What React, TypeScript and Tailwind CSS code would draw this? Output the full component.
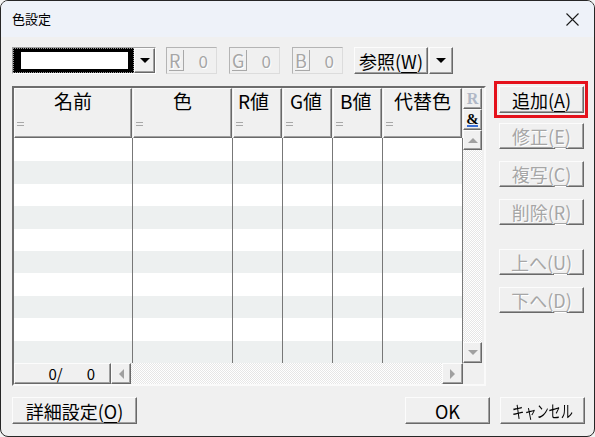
import React from "react";

const raised =
  "bg-[#f0f0f0] border border-t-[#fcfcfc] border-l-[#fcfcfc] border-r-[#696969] border-b-[#696969] shadow-[inset_-1px_-1px_0_#a0a0a0]";
const disabled = "text-[#a6a6a6] [text-shadow:1px_1px_0_#ffffff]";
const dither =
  "bg-[repeating-conic-gradient(#ffffff_0_25%,#e6e6e6_0_50%)] bg-[length:2px_2px]";

const Key = ({ label, k }: { label: string; k: string }) => (
  <>
    {label}(<span className="underline underline-offset-[3px] decoration-1">{k}</span>)
  </>
);

const Btn = ({
  children,
  off,
  className = "",
}: {
  children: React.ReactNode;
  off?: boolean;
  className?: string;
}) => (
  <div
    className={`${raised} flex items-center justify-center whitespace-nowrap text-[18px] leading-none ${
      off ? disabled : "text-black"
    } ${className}`}
  >
    {children}
  </div>
);

const Tri = ({ dir, color = "#a0a0a0" }: { dir: "up" | "down" | "left" | "right"; color?: string }) => {
  const pts = {
    up: "0,5 5,0 10,5",
    down: "0,0 10,0 5,5",
    left: "5,0 5,10 0,5",
    right: "0,0 0,10 5,5",
  }[dir];
  const w = dir === "up" || dir === "down" ? 10 : 5;
  const h = dir === "up" || dir === "down" ? 5 : 10;
  return (
    <svg width={w} height={h} viewBox={`0 0 ${w} ${h}`}>
      <polygon points={pts} fill={color} />
    </svg>
  );
};

/* columns of the list */
const cols = [
  { t: "名前", w: "w-[119px]", j: "justify-center" },
  { t: "色", w: "w-[100px]", j: "justify-center" },
  { t: "R値", w: "w-[50px]", j: "pl-[4px]" },
  { t: "G値", w: "w-[50px]", j: "pl-[6px]" },
  { t: "B値", w: "w-[50px]", j: "pl-[6px]" },
  { t: "代替色", w: "w-[80px]", j: "justify-center" },
];

const rows = Array.from({ length: 10 }, (_, i) => i);

const NumField = ({ l }: { l: string }) => (
  <div className="w-[51px] h-[27px] border border-t-[#b4b4b4] border-l-[#b4b4b4] border-r-[#dcdcdc] border-b-[#dcdcdc] flex items-stretch">
    <div className={`w-[15px] ml-[2px] my-[2px] border-r border-b border-[#a8a8a8] text-[18px] leading-[21px] ${disabled}`}>
      {l}
    </div>
    <div className={`flex-1 text-right pr-[8px] text-[17px] leading-[25px] ${disabled}`}>0</div>
  </div>
);

export default function App() {
  return (
    <div className="w-[595px] h-[437px] bg-[#f3f3f3] font-['Noto_Sans_CJK_JP','Noto_Sans',sans-serif]">
      <div className="w-full h-full rounded-[8px] border border-[#262626] overflow-hidden flex flex-col bg-[#f0f0f0]">
        {/* Title bar */}
        <div className="h-[36px] bg-[#eef2f9] flex items-center justify-between pl-[11px] pr-[15px]">
          <span className="text-[13px] text-black">色設定</span>
          <svg width="13" height="13" viewBox="0 0 13 13">
            <path d="M0.5 0.5 L12.5 12.5 M12.5 0.5 L0.5 12.5" stroke="#1a1a1a" strokeWidth="1.1" />
          </svg>
        </div>

        <div className="flex-1 flex flex-col pl-[11px] pr-[9px] pt-[10px]">
          {/* Toolbar */}
          <div className="flex items-center h-[27px]">
            <div className="flex h-[27px] border border-t-[#a0a0a0] border-l-[#a0a0a0] border-r-white border-b-white">
              <div className="w-[121px] h-full bg-black border border-dotted border-[#9a9a9a] pl-[7px] pr-[5px] py-[3px]">
                <div className="w-full h-full bg-white" />
              </div>
              <div className={`${raised} w-[21px] h-full flex items-center justify-center`}>
                <Tri dir="down" color="#000" />
              </div>
            </div>
            <div className="ml-[10px]">
              <NumField l="R" />
            </div>
            <div className="ml-[12px]">
              <NumField l="G" />
            </div>
            <div className="ml-[12px]">
              <NumField l="B" />
            </div>
            <Btn className="ml-[11px] w-[74px] h-[27px]">
              <Key label="参照" k="W" />
            </Btn>
            <div className={`${raised} ml-px w-[24px] h-[27px] flex items-center justify-center`}>
              <Tri dir="down" color="#000" />
            </div>
          </div>

          {/* Main */}
          <div className="flex mt-[12px]">
            <div className="w-[474px] h-[300px] border-2 border-t-[#6d6d6d] border-l-[#6d6d6d] border-r-[#fafafa] border-b-[#fafafa] flex bg-[#f0f0f0]">
              <div className="w-[449px] flex flex-col">
                {/* header */}
                <div className="flex h-[50px]">
                  {cols.map((c) => (
                    <div key={c.t} className={`${c.w} h-full pr-px`}>
                      <div className={`${raised} h-full flex flex-col`}>
                        <div className={`flex ${c.j} text-[19px] leading-[22px] pt-[1px] text-black`}>{c.t}</div>
                        <div className="mt-auto mb-[11px] ml-[2px] w-[7px] h-[4px] border-y border-[#a8a8a8]" />
                      </div>
                    </div>
                  ))}
                </div>
                {/* body */}
                <div className="flex h-[225px] bg-white">
                  {cols.map((c) => (
                    <div key={c.t} className={`${c.w} h-full flex flex-col border-r border-[#777777] pt-px`}>
                      {rows.map((r) => (
                        <div key={r} className={`flex-1 ${r % 2 === 1 ? "bg-[#edf0f0]" : "bg-white"}`} />
                      ))}
                    </div>
                  ))}
                </div>
                {/* horizontal bar */}
                <div className="flex h-[21px]">
                  <div className={`${raised} w-[97px] flex items-center justify-end pr-[15px] text-[15px] text-black leading-none`}>
                    <span>0/</span>
                    <span className="ml-[24px]">0</span>
                  </div>
                  <div className={`${raised} w-[20px] flex items-center justify-center`}>
                    <Tri dir="left" />
                  </div>
                  <div className={`flex-1 ${dither}`} />
                  <div className={`${raised} w-[21px] flex items-center justify-center`}>
                    <Tri dir="right" />
                  </div>
                </div>
              </div>

              {/* vertical bar */}
              <div className="w-[21px] flex flex-col pr-[2px]">
                <div className={`${raised} h-[21px] flex items-center justify-center font-['Liberation_Serif',serif] text-[16px] font-bold text-[#b0b8c6] leading-none`}>
                  R
                </div>
                <div className={`${raised} h-[21px] flex flex-col items-center justify-center leading-none`}>
                  <span className="font-['Liberation_Serif',serif] text-[15px] font-bold text-black">&amp;</span>
                  <span className="w-[11px] h-[2px] bg-[#3a6fd8] -mt-[2px]" />
                </div>
                <div className={`${raised} h-[20px] flex items-center justify-center`}>
                  <Tri dir="up" />
                </div>
                <div className={`flex-1 ${dither}`} />
                <div className={`${raised} h-[21px] flex items-center justify-center`}>
                  <Tri dir="down" />
                </div>
                <div className="h-[21px]" />
              </div>
            </div>

            {/* Right buttons */}
            <div className="ml-[13px] w-[85px] flex flex-col">
              <div className="relative">
                <Btn className="h-[27px]">
                  <Key label="追加" k="A" />
                </Btn>
                <div className="absolute -left-[5px] -right-[4px] -top-[5px] -bottom-[5px] border-[3px] border-[#e5121c]" />
              </div>
              <Btn off className="h-[26px] mt-[10px]">
                <Key label="修正" k="E" />
              </Btn>
              <Btn off className="h-[26px] mt-[12px]">
                <Key label="複写" k="C" />
              </Btn>
              <Btn off className="h-[26px] mt-[12px]">
                <Key label="削除" k="R" />
              </Btn>
              <Btn off className="h-[26px] mt-[24px]">
                <Key label="上へ" k="U" />
              </Btn>
              <Btn off className="h-[26px] mt-[12px]">
                <Key label="下へ" k="D" />
              </Btn>
            </div>
          </div>

          {/* Bottom buttons */}
          <div className="flex mt-[11px]">
            <Btn className="w-[125px] h-[27px]">
              <Key label="詳細設定" k="O" />
            </Btn>
            <Btn className="ml-auto w-[85px] h-[27px]">OK</Btn>
            <Btn className="ml-[10px] w-[85px] h-[27px] overflow-hidden">
              <span className="inline-block text-[17px] scale-x-[0.72]">キャンセル</span>
            </Btn>
          </div>
        </div>
      </div>
    </div>
  );
}
